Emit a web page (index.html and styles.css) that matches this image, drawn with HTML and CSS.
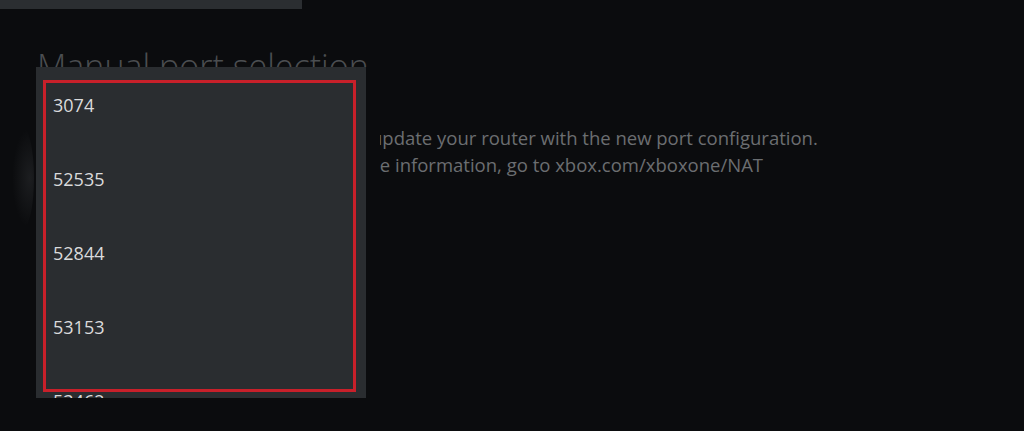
FILE: index.html
```html
<!DOCTYPE html>
<html>
<head>
	<meta charset="utf-8">
	<title>Manual port selection</title>
	<link rel="stylesheet" href="styles.css">
</head>
<body>
	<div class="topbar"></div>

	<div class="page">
		<h1>Manual port selection</h1>
		<p class="info">
			<span class="info__line"><span class="info__lead info__lead--first">After you pick a port,&nbsp;</span>update your router with the new port configuration.</span>
			<span class="info__line"><span class="info__lead info__lead--second">For more&nbsp;</span>information, go to xbox.com/xboxone/NAT</span>
		</p>
	</div>

	<div class="glow glow--left"></div>

	<div class="picker">
		<ul class="picker__list">
			<li>3074</li>
			<li>52535</li>
			<li>52844</li>
			<li>53153</li>
			<li>53462</li>
		</ul>
		<div class="picker__frame"></div>
	</div>
</body>
</html>
```

FILE: styles.css
```css
body {
	font-family: "Open Sans", "Noto Sans", sans-serif;
	color: #d6d7d8;
	background-color: #0b0c0e;
	margin: 0;
	height: 431px;
	overflow: hidden;
	position: relative;
}

.topbar {
	width: 302px;
	height: 9px;
	background-color: #2b2e31;
}

.page {
	padding-left: 37px;
}

h1 {
	font-weight: 300;
	font-size: 34px;
	line-height: 1;
	color: #4b4e51;
	margin: 40px 0 0;
	white-space: nowrap;
}

.info {
	margin: 0;
	padding-top: 41px;
	font-size: 18.5px;
	line-height: 27px;
	color: #6b6e71;
}

.info__line {
	display: block;
	white-space: nowrap;
}

.info__lead {
	display: inline-block;
	text-align: right;
	overflow: hidden;
	vertical-align: bottom;
}

.info__lead--first {
	width: 334px;
}

.info__lead--second {
	width: 358px;
}

.glow {
	position: absolute;
	top: 128px;
	left: 12px;
	width: 22px;
	height: 100px;
	border-radius: 50%;
	background: radial-gradient(ellipse at 80% 50%, rgba(60, 62, 65, .35), rgba(60, 62, 65, 0) 70%);
}

.picker {
	position: absolute;
	top: 67px;
	left: 36px;
	width: 330px;
	height: 331px;
	overflow: hidden;
	background-color: #2a2d30;
	box-shadow: 14px 0 0 #0b0c0e;
}

.picker__list {
	list-style: none;
	margin: 0;
	padding: 1px 0 0;
}

.picker__list li {
	height: 74px;
	display: flex;
	align-items: center;
	padding-left: 17px;
	font-size: 18px;
	color: #dadbdc;
}

.picker__frame {
	position: absolute;
	top: 13px;
	left: 7px;
	width: 307px;
	height: 306px;
	border: 3px solid #c8202a;
}
```
